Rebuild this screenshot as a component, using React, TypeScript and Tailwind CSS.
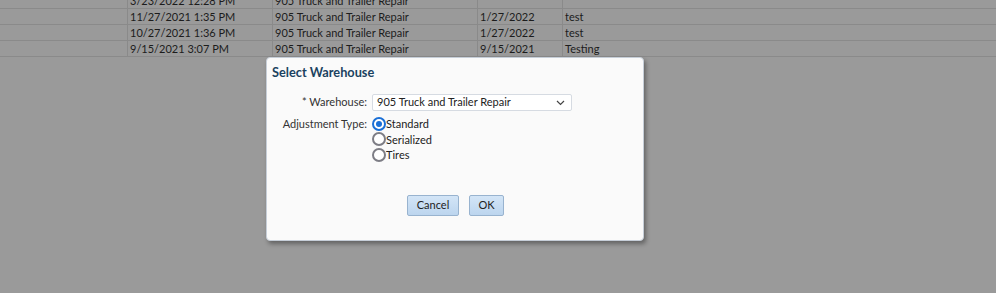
import React from "react";

const rows = [
  ["3/23/2022 12:28 PM", "905 Truck and Trailer Repair", "", ""],
  ["11/27/2021 1:35 PM", "905 Truck and Trailer Repair", "1/27/2022", "test"],
  ["10/27/2021 1:36 PM", "905 Truck and Trailer Repair", "1/27/2022", "test"],
  ["9/15/2021 3:07 PM", "905 Truck and Trailer Repair", "9/15/2021", "Testing"],
];

function Radio({ checked, label }: { checked?: boolean; label: string }) {
  return (
    <label className="flex items-center h-[15.5px]">
      <span
        className={
          checked
            ? "w-[14px] h-[14px] rounded-full border-[2px] border-[#1a6fd6] bg-white flex items-center justify-center"
            : "w-[14px] h-[14px] rounded-full border-[2px] border-[#7d7d85] bg-white"
        }
      >
        {checked && <span className="w-[6px] h-[6px] rounded-full bg-[#1a6fd6]" />}
      </span>
      <span className="text-[11px] leading-[15px] text-[#222]">{label}</span>
    </label>
  );
}

export default function App() {
  return (
    <div
      className="relative w-[996px] h-[293px] overflow-hidden bg-[#9a9a9a]"
      style={{ fontFamily: 'Lato, "Noto Sans", sans-serif' }}
    >
      <div className="-mt-[7px]">
        {rows.map((r, i) => (
          <div key={i} className="flex h-[16px] border-b border-[#8a8a8a] text-[11px] leading-[15px] text-[#1c1c1c]">
            <div className="w-[128px] border-r border-[#8a8a8a]" />
            <div className="w-[145px] pl-[2px] border-r border-[#8a8a8a] whitespace-nowrap overflow-hidden">{r[0]}</div>
            <div className="w-[205px] pl-[2px] border-r border-[#8a8a8a] whitespace-nowrap overflow-hidden">{r[1]}</div>
            <div className="w-[85px] pl-[2px] border-r border-[#8a8a8a] whitespace-nowrap overflow-hidden">{r[2]}</div>
            <div className="flex-1 pl-[2px] whitespace-nowrap overflow-hidden">{r[3]}</div>
          </div>
        ))}
      </div>

      <div className="absolute left-[266px] top-[57px] w-[378px] h-[184px] bg-[#fafafa] border border-[#c6ced8] rounded-[4px] shadow-[2px_3px_4px_rgba(0,0,0,0.35)] flex flex-col">
        <div className="pl-[5px] pt-[7px] text-[12.75px] font-bold text-[#1a4260] leading-[15px]">Select Warehouse</div>
        <div className="mt-[14px] flex flex-col">
          <div className="flex items-center h-[17px]">
            <div className="w-[105px] shrink-0 whitespace-nowrap text-right text-[11px] text-[#333] pr-[5px]">* Warehouse:</div>
            <div className="w-[200px] h-[17px] border border-[#d6dbe2] bg-white rounded-[2px] flex items-center pl-[4px] pr-[6px] text-[11px] text-[#222]">
              <span className="flex-1 whitespace-nowrap">905 Truck and Trailer Repair</span>
              <svg width="9" height="6" viewBox="0 0 9 6">
                <path d="M1 1 L4.5 4.5 L8 1" fill="none" stroke="#444" strokeWidth="1.2" />
              </svg>
            </div>
          </div>
          <div className="flex mt-[5px]">
            <div className="w-[105px] shrink-0 whitespace-nowrap text-right text-[11px] text-[#333] pr-[5px] leading-[15px]">Adjustment Type:</div>
            <div className="flex flex-col">
              <Radio checked label="Standard" />
              <Radio label="Serialized" />
              <Radio label="Tires" />
            </div>
          </div>
        </div>
        <div className="mt-[32px] flex justify-center gap-[10px] pl-[1px]">
          <button className="w-[52px] h-[21px] rounded-[2px] border border-[#98b3cf] bg-gradient-to-b from-[#d3e5f7] to-[#bcd5ee] text-[11px] text-[#222]">Cancel</button>
          <button className="w-[35px] h-[21px] rounded-[2px] border border-[#98b3cf] bg-gradient-to-b from-[#d3e5f7] to-[#bcd5ee] text-[11px] text-[#222]">OK</button>
        </div>
      </div>
    </div>
  );
}
